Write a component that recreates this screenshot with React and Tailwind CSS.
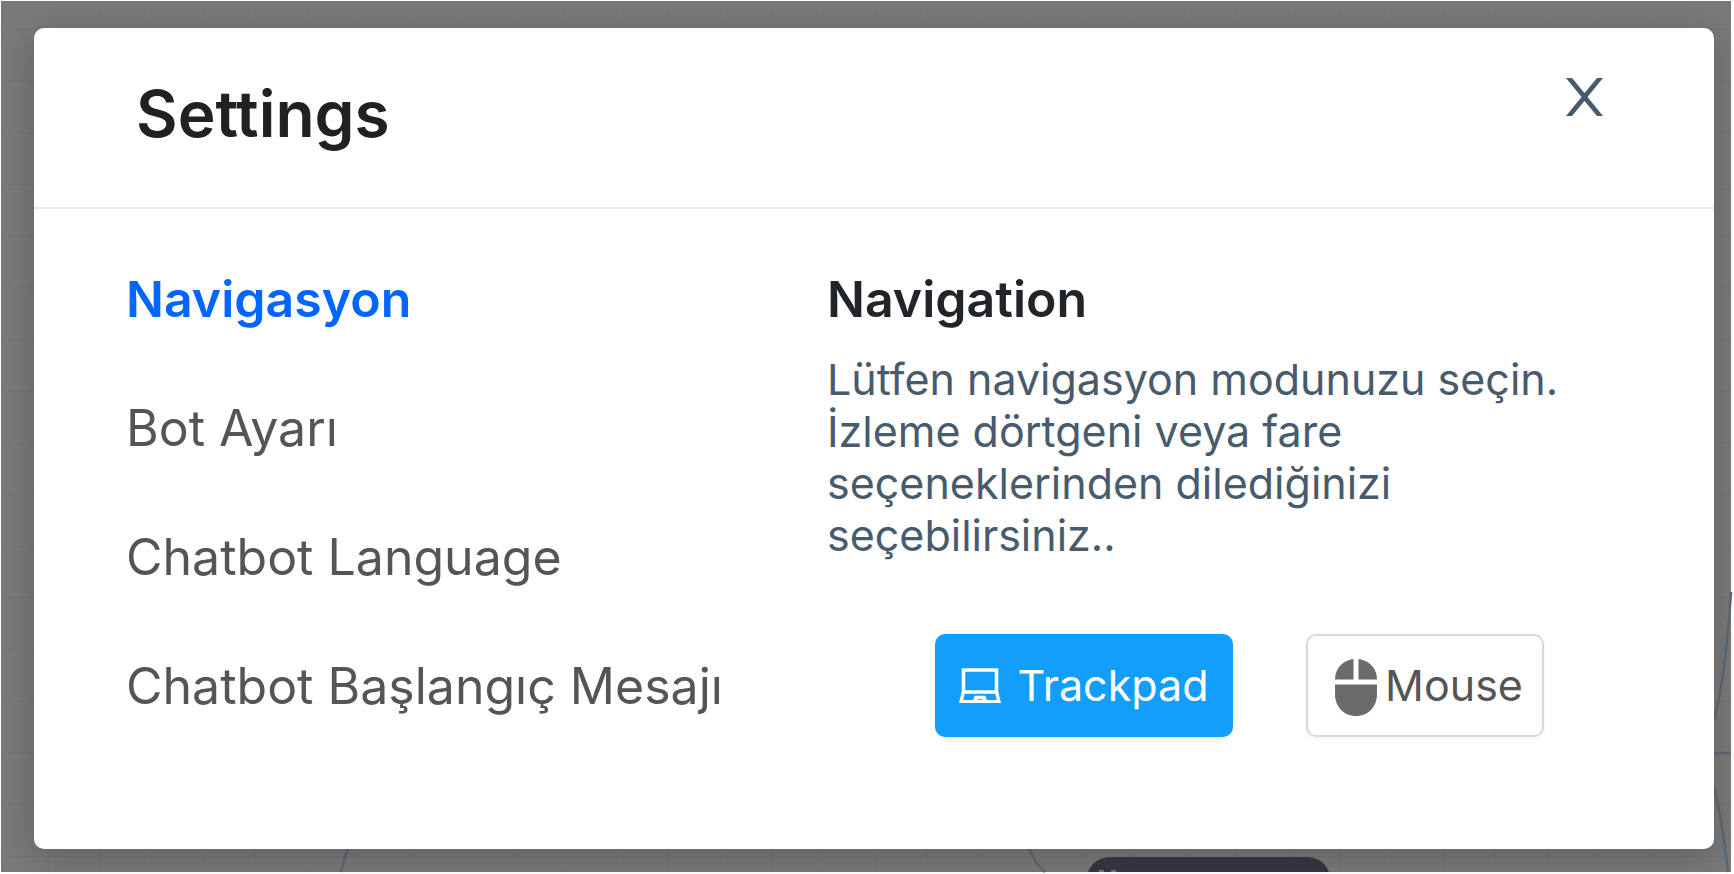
import { useState } from "react";

const MENU = ["Navigasyon", "Bot Ayarı", "Chatbot Language", "Chatbot Başlangıç Mesajı"];

function LaptopIcon() {
  return (
    <svg aria-hidden="true" className="w-[42px] h-9 shrink-0" viewBox="0 0 42 36" fill="none" stroke="currentColor">
      <path d="M4.500 2H37.500V24H4.500Z" strokeWidth="3.600" />
      <path d="M4.500 24L2 33.500H40L37.500 24" strokeWidth="3.200" />
      <path d="M15.500 33.500L17 29.500H25L26.500 33.500" strokeWidth="3.600" />
    </svg>
  );
}

function MouseIcon() {
  return (
    <svg aria-hidden="true" className="w-[42px] h-[60px] shrink-0" viewBox="0 -3 42 60" fill="#6b6b6b">
      <path d="M18.500 0V20.500H0C0 9 8 1.500 18.500 0Z" />
      <path d="M23.500 0V20.500H42C42 9 34 1.500 23.500 0Z" />
      <path d="M0 25.500H42V35C42 48 33 57 21 57S0 48 0 35Z" />
    </svg>
  );
}

function CloseIcon() {
  return (
    <svg aria-hidden="true" className="w-[38px] h-[38px]" viewBox="0 0 38 38" fill="#475b6d">
      <path d="M0 0H6L18.500 15L31 0H37L21.500 19L37 38H31L18.500 23L6 38H0L15.500 19Z" />
    </svg>
  );
}

// dimmed flow canvas behind the dialog
function Canvas() {
  return (
    <svg aria-hidden="true" className="absolute inset-0 w-full h-full" viewBox="0 0 1734 874" preserveAspectRatio="none">
      <defs>
        <pattern id="grid" x="48" y="29" width="51.670" height="51.670" patternUnits="userSpaceOnUse">
          <path d="M0.500 0V52M0 0.500H52" stroke="#747474" strokeWidth="1" />
        </pattern>
      </defs>
      <rect width="1734" height="874" fill="#fff" />
      <rect x="1" y="1" width="1730" height="871" fill="#797979" />
      <rect x="1" y="1" width="1730" height="871" fill="url(#grid)" />
      <g fill="none" stroke="#5c6873" strokeWidth="2.500">
        <path d="M348 848Q344 860 341 872" />
        <path d="M1029 848Q1034 862 1045 872" />
        <path d="M1731 592Q1725 680 1714 720" />
        <path d="M1714 753H1731" />
        <path d="M1714 786Q1722 820 1728 872" />
      </g>
      <path d="M1088 872C1092 862 1100 857 1112 857H1305C1317 857 1325 862 1329 872Z" fill="#373741" />
      <path d="M1099 871H1104M1111 871H1116" stroke="#77777e" strokeWidth="2" />
    </svg>
  );
}

export default function App() {
  const [active, setActive] = useState(MENU[0]);

  return (
    <div className="relative min-h-screen pt-7 pl-[34px] pr-5 pb-6 font-['Inter',sans-serif]">
      <Canvas />
      <div role="dialog" aria-labelledby="title" className="relative bg-white rounded-[10px] shadow-[0_8px_32px_rgba(0,0,0,0.2)]">
        <header className="flex items-start justify-between h-[181px] pl-[102px] pr-[110px] pt-[50px] border-b-2 border-[#e9e9e9]">
          <h1 id="title" className="text-[64px] leading-[72px] font-semibold text-[#212121]">Settings</h1>
          <button type="button" aria-label="Close"><CloseIcon /></button>
        </header>
        <div className="grid grid-cols-[701px_1fr] pl-[92px] pr-[90px] pt-[62px] pb-[112px]">
          <nav className="flex flex-col items-start gap-[73px]">
            {MENU.map((item) => (
              <button
                key={item}
                type="button"
                onClick={() => setActive(item)}
                className={`text-[50px] leading-[56px] whitespace-nowrap ${item === active ? "font-semibold text-[#0066ff]" : "text-[#555555]"}`}
              >
                {item}
              </button>
            ))}
          </nav>
          <section>
            <h2 className="text-[50px] leading-[56px] font-semibold text-[#212529]">Navigation</h2>
            <p className="mt-[26px] text-[43px] leading-[52px] text-[#475b6d]">
              Lütfen navigasyon modunuzu seçin.<br />
              İzleme dörtgeni veya fare<br />
              seçeneklerinden dilediğinizi<br />
              seçebilirsiniz..
            </p>
            <div className="flex justify-end gap-[73px] mt-[73px] pr-20 text-[43px]">
              <button type="button" className="flex items-center justify-center gap-4 w-[298px] h-[103px] rounded-[10px] bg-[#149efb] text-white shadow-[0_3px_4px_rgba(0,0,0,0.06)]">
                <LaptopIcon />
                Trackpad
              </button>
              <button type="button" className="flex items-center justify-center gap-2 w-[238px] h-[103px] pl-2 rounded-[10px] bg-white border-2 border-[#d9d9d9] text-[#555555] shadow-[0_3px_4px_rgba(0,0,0,0.04)]">
                <MouseIcon />
                Mouse
              </button>
            </div>
          </section>
        </div>
      </div>
    </div>
  );
}
